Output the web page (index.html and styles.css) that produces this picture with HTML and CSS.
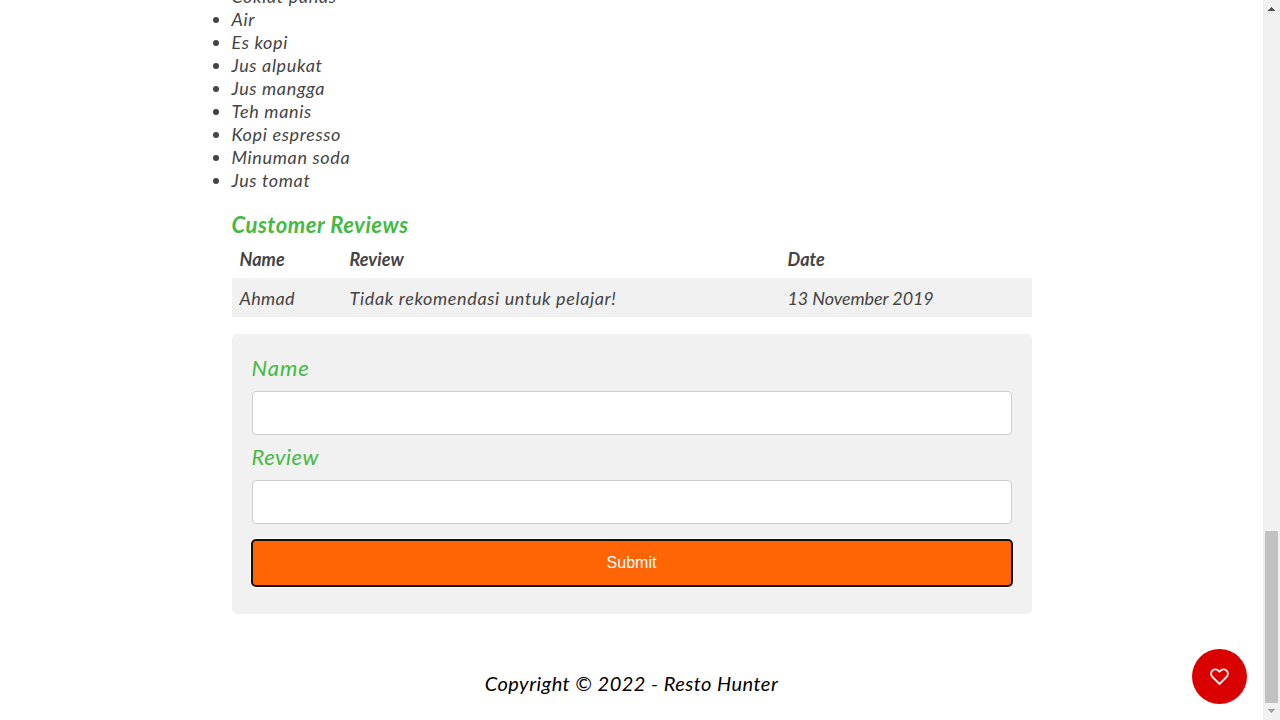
FILE: index.html
```html
<!DOCTYPE html>
<html lang="id">
<head>
<meta charset="utf-8">
<title>Resto Hunter</title>
<link rel="stylesheet" href="styles.css">
</head>
<body>
<div class="page">
  <main class="content">
    <ul class="drinks">
      <li>Coklat panas</li>
      <li>Air</li>
      <li>Es kopi</li>
      <li>Jus alpukat</li>
      <li>Jus mangga</li>
      <li>Teh manis</li>
      <li>Kopi espresso</li>
      <li>Minuman soda</li>
      <li>Jus tomat</li>
    </ul>
    <h3 class="title">Customer Reviews</h3>
    <table class="reviews">
      <thead><tr><th class="col-name">Name</th><th class="col-review">Review</th><th>Date</th></tr></thead>
      <tbody><tr><td class="name">Ahmad</td><td>Tidak rekomendasi untuk pelajar!</td><td class="date">13 November 2019</td></tr></tbody>
    </table>
    <form class="form">
      <label class="label label-name" for="name">Name</label>
      <input class="input" id="name" type="text">
      <label class="label" for="review">Review</label>
      <input class="input" id="review" type="text">
      <button class="submit" type="button">Submit</button>
    </form>
  </main>
  <footer class="footer"><span>Copyright © 2022 - Resto Hunter</span></footer>
</div>
<div class="scrollbar">
  <svg class="arrow" width="17" height="17" viewBox="0 0 17 17" shape-rendering="crispEdges"><path d="M5 11h7v-1h-1v-1h-1v-1h-1v-1h-1v1h-1v1h-1v1h-1z" fill="#505050"/></svg>
  <div class="thumb"></div>
  <svg class="arrow" width="17" height="17" viewBox="0 0 17 17" shape-rendering="crispEdges"><path d="M5 6h7v1h-1v1h-1v1h-1v1h-1v-1h-1v-1h-1v-1h-1z" fill="#a3a3a3"/></svg>
</div>
<button class="like" aria-label="like">
  <svg width="20" height="18" viewBox="0 0 20 18"><path d="M9.500 16 2.500 9C.6 7.100.6 4.300 2.300 2.700 4.200 1 6.900 1.200 8.600 2.900L9.500 3.800l.9-.9C12.100 1.200 14.800 1 16.700 2.700c1.700 1.600 1.700 4.400-.2 6.300z" fill="none" stroke="#fff" stroke-opacity=".92" stroke-width="1.900" stroke-linejoin="round"/></svg>
</button>
</body>
</html>
```
FILE: styles.css
```css
* { box-sizing: border-box; }
body {
  margin: 0;
  height: 720px;
  display: flex;
  overflow: hidden;
  background: #fff;
  color: #444;
  font: italic 18px/23px Lato, sans-serif;
}
.page { flex: 1; height: 720px; overflow: hidden; }
.content { width: 800px; margin: 0 auto; }
.drinks { margin: -15px 0 0; padding: 0; letter-spacing: 0.65px; }
.title { margin: 17px 0 0; padding-top: 1px; font-size: 22px; line-height: 29px; color: #44b944; letter-spacing: 0.52px; }
.reviews { width: 100%; border-collapse: collapse; table-layout: fixed; letter-spacing: 0.63px; }
.reviews th, .reviews td { padding: 9px 8px 7px; text-align: left; white-space: nowrap; }
.reviews th { letter-spacing: 0.05px; }
.reviews .name { letter-spacing: 0.3px; }
.reviews .date { letter-spacing: -0.1px; }
.reviews tbody tr { background: #f1f1f1; }
.col-name { width: 110px; }
.col-review { width: 438px; }
.form { height: 280px; margin-top: 17px; padding: 20px; border-radius: 5px; background: #f1f1f1; }
.label { display: block; height: 29px; font-size: 22px; line-height: 28px; color: #44b944; letter-spacing: 0.5px; }
.label-name { letter-spacing: 1px; }
.input {
  display: block;
  width: 100%;
  height: 44px;
  margin: 8px 0;
  padding: 12px 20px;
  border: 1px solid #ccc;
  border-radius: 4px;
  background: #fff;
}
.submit {
  display: block;
  width: 100%;
  height: 46px;
  margin-top: 16px;
  padding: 0;
  border: 0;
  border-radius: 4px;
  outline: 2px solid #101010;
  outline-offset: -1px;
  box-shadow: 0 0 0 2px #fff;
  background: #ff6505;
  color: #fff;
  font: 16px "Liberation Sans", Arial, sans-serif;
}
.footer { padding-top: 54px; text-align: center; font-size: 20px; line-height: 30px; color: #000; letter-spacing: 0.47px; }
.scrollbar { width: 17px; height: 720px; display: flex; flex-direction: column; background: #f1f1f1; }
.arrow { display: block; flex: none; }
.thumb { width: 13px; height: 172px; margin: auto 2px 0; background: #c1c1c1; }
.like {
  position: fixed;
  right: 33px;
  bottom: 16px;
  width: 55px;
  height: 55px;
  display: flex;
  align-items: center;
  justify-content: center;
  padding: 0;
  border: 0;
  border-radius: 50%;
  background: #db0000;
}
```
